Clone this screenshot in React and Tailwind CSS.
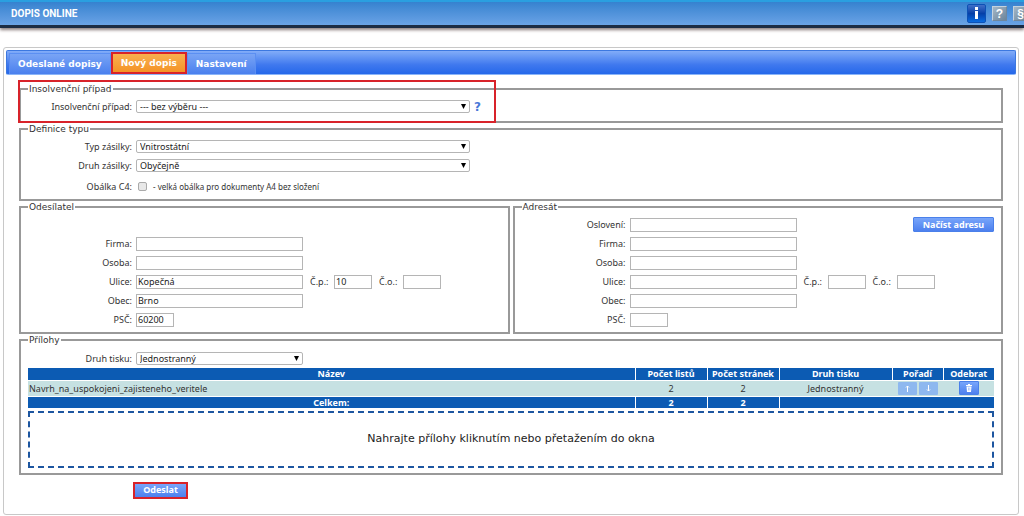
import React, { useState } from 'react';

const Fieldset = ({ legend, className = '', children }) => (
    <fieldset className={`min-w-0 border-2 border-[#999] px-[7px] ${className}`}>
        <legend className="px-px font-['DejaVu_Sans',sans-serif] text-[9px] leading-[12px] text-[#333]">{legend}</legend>
        {children}
    </fieldset>
);

const Row = ({ id, label, children }) => (
    <div className="flex h-[19px] items-center gap-1">
        <label htmlFor={id} className="w-[104px] shrink-0 text-right">{label}</label>
        {children}
    </div>
);

const Select = ({ id, width, options }) => (
    <div className={`relative ${width}`}>
        <select id={id} className="block h-[13px] w-full appearance-none rounded-[2px] border border-[#b5b5b5] bg-white pl-[3px] leading-[11px] text-[#222]">
            {options.map((o) => <option key={o}>{o}</option>)}
        </select>
        <svg viewBox="0 0 5 5" className="pointer-events-none absolute top-1 right-1 h-[5px] w-[5px]">
            <path d="M0 0h5L2.500 5z" fill="#000" />
        </svg>
    </div>
);

const TextInput = ({ id, width = 'w-[167px]', value = '' }) => (
    <input id={id} type="text" defaultValue={value} className={`block h-[14px] border border-[#b5b5b5] bg-white px-[1px] leading-[12px] text-[#222] ${width}`} />
);

const Street = ({ prefix, street, number }) => (
    <Row id={`${prefix}-ulice`} label="Ulice:">
        <TextInput id={`${prefix}-ulice`} value={street} />
        <label htmlFor={`${prefix}-cp`} className="ml-[3px] w-[20px] whitespace-nowrap">Č.p.:</label>
        <TextInput id={`${prefix}-cp`} width="w-[38px]" value={number} />
        <label htmlFor={`${prefix}-co`} className="ml-[3px] w-[20px] whitespace-nowrap">Č.o.:</label>
        <TextInput id={`${prefix}-co`} width="w-[38px]" />
    </Row>
);

const Address = ({ prefix, street, number, city, zip }) => (
    <>
        <Row id={`${prefix}-firma`} label="Firma:"><TextInput id={`${prefix}-firma`} /></Row>
        <Row id={`${prefix}-osoba`} label="Osoba:"><TextInput id={`${prefix}-osoba`} /></Row>
        <Street prefix={prefix} street={street} number={number} />
        <Row id={`${prefix}-obec`} label="Obec:"><TextInput id={`${prefix}-obec`} value={city} /></Row>
        <Row id={`${prefix}-psc`} label="PSČ:"><TextInput id={`${prefix}-psc`} width="w-[38px]" value={zip} /></Row>
    </>
);

const tabs = ['Odeslané dopisy', 'Nový dopis', 'Nastavení'];

const App = () => {
    const [active, setActive] = useState('Nový dopis');

    return (
        <div className="bg-white font-['Noto_Sans','DejaVu_Sans',sans-serif] text-[9px] leading-[12px] text-[#333]">
            <header className="flex h-[28px] items-center justify-between overflow-hidden border-t-2 border-b-3 border-t-[#2a9fe0] border-b-[#1c2c44] bg-linear-to-b from-[#3582cf] to-[#6aa3e6] pl-[11px] shadow-[0_2px_3px_#8c7f7f]">
                <h1 className="font-['Roboto',sans-serif] text-[10px] font-bold text-white">DOPIS ONLINE</h1>
                <div className="-mr-1 flex items-center gap-[6px]">
                    <button type="button" aria-label="Informace" className="h-[19px] w-[19px] rounded-[2px] border border-[#0d51b5] bg-linear-to-b from-[#3f6fc8] via-[#0640a8] to-[#0a6be0]">
                        <svg viewBox="0 0 17 17" className="block h-full w-full">
                            <path d="M7 2h3v3H7zM7 6h3v8H7z" fill="#fff" />
                        </svg>
                    </button>
                    <button type="button" className="h-[15px] w-[15px] border border-[#6f879e] border-t-[#c5d2de] border-l-[#c5d2de] bg-linear-to-br from-[#a5b8c8] to-[#6c8499] font-['Liberation_Sans',sans-serif] text-[12px] leading-[12px] font-bold text-white">?</button>
                    <button type="button" className="h-[15px] w-[15px] border border-[#6f879e] border-t-[#c5d2de] border-l-[#c5d2de] bg-linear-to-br from-[#a5b8c8] to-[#6c8499] font-['Liberation_Sans',sans-serif] text-[12px] leading-[12px] font-bold text-white">§</button>
                </div>
            </header>

            <main className="mt-[19px] mr-[5px] mb-[2px] ml-[3px] rounded-[3px] border border-[#c8c8c8] p-[2px] pb-[15px]">
                <nav className="flex h-[25px] items-end rounded-[2px] border border-[#3c78e0] border-b-[#8ab4f8] bg-linear-to-b from-[#82acf8] via-[#3f78ee] via-60% to-[#2468ea] pl-[2px] font-['DejaVu_Sans',sans-serif] text-[9px] font-bold text-white">
                    {tabs.map((tab) => (
                        <button
                            key={tab}
                            type="button"
                            onClick={() => setActive(tab)}
                            className={tab === active
                                ? 'h-[22px] border-2 border-[#d8232a] bg-linear-to-b from-[#f9b04e] to-[#f49325] px-[8px]'
                                : 'h-[21px] border border-b-0 border-[#5b8ff2] bg-linear-to-b from-[#79a4f5] to-[#4a80ee] px-[8px]'}
                        >
                            {tab}
                        </button>
                    ))}
                </nav>

                <form className="px-[13px] pt-[8px]" onSubmit={(e) => e.preventDefault()}>
                    <div className="relative">
                        <Fieldset legend="Insolvenční případ" className="h-[40px] pt-[2px]">
                            <Row id="pripad" label="Insolvenční případ:">
                                <Select id="pripad" width="w-[334px]" options={['--- bez výběru ---']} />
                                <a href="#napoveda" className="font-['DejaVu_Sans',sans-serif] text-[12px] font-bold text-[#4a78d8]">?</a>
                            </Row>
                        </Fieldset>
                        <div className="pointer-events-none absolute -top-[3px] -left-px h-[43px] w-[478px] border-2 border-[#d8232a]" />
                    </div>

                    <Fieldset legend="Definice typu" className="h-[78px] pt-[2px]">
                        <Row id="typ" label="Typ zásilky:">
                            <Select id="typ" width="w-[334px]" options={['Vnitrostátní']} />
                        </Row>
                        <Row id="druh" label="Druh zásilky:">
                            <Select id="druh" width="w-[334px]" options={['Obyčejně']} />
                        </Row>
                        <div className="pt-[2px]">
                            <Row id="obalka" label="Obálka C4:">
                                <input id="obalka" type="checkbox" className="ml-[2px] h-[9px] w-[9px] appearance-none rounded-[2px] border border-[#aaa] bg-[#e8e8e8]" />
                                <span className="ml-[2px] text-[8px]">- velká obálka pro dokumenty A4 bez složení</span>
                            </Row>
                        </div>
                    </Fieldset>

                    <div className="flex gap-[3px]">
                        <Fieldset legend="Odesílatel" className="h-[133px] flex-1 pt-[21px]">
                            <Address prefix="odesilatel" street="Kopečná" number="10" city="Brno" zip="60200" />
                        </Fieldset>
                        <Fieldset legend="Adresát" className="h-[133px] flex-1 pt-[2px]">
                            <div className="flex items-center justify-between">
                                <Row id="osloveni" label="Oslovení:"><TextInput id="osloveni" /></Row>
                                <button type="button" className="h-[15px] w-[81px] rounded-[1px] border border-[#4a80ea] bg-linear-to-b from-[#78a5fa] to-[#4d80ee] text-[9px] leading-[12px] font-bold whitespace-nowrap text-white">Načíst adresu</button>
                            </div>
                            <Address prefix="adresat" />
                        </Fieldset>
                    </div>

                    <Fieldset legend="Přílohy" className="pt-[3px] pb-[5px]">
                        <Row id="tisk" label="Druh tisku:">
                            <Select id="tisk" width="w-[167px]" options={['Jednostranný']} />
                        </Row>
                        <table className="w-full table-fixed border-collapse text-center leading-[11px]">
                            <colgroup>
                                <col />
                                <col className="w-[72px]" />
                                <col className="w-[72px]" />
                                <col className="w-[113px]" />
                                <col className="w-[51px]" />
                                <col className="w-[51px]" />
                            </colgroup>
                            <thead className="bg-[#0c5bb3] text-[9px] whitespace-nowrap text-white">
                                <tr className="h-[12px]">
                                    <th className="p-0">Název</th>
                                    <th className="border-l border-white p-0">Počet listů</th>
                                    <th className="border-l border-white p-0">Počet stránek</th>
                                    <th className="border-l border-white p-0">Druh tisku</th>
                                    <th className="border-l border-white p-0">Pořadí</th>
                                    <th className="border-l border-white p-0">Odebrat</th>
                                </tr>
                            </thead>
                            <tbody className="border-y border-white bg-[#c6e1e2]">
                                <tr className="h-[16px]">
                                    <td className="p-0 pl-px text-left">Navrh_na_uspokojeni_zajisteneho_veritele</td>
                                    <td className="p-0">2</td>
                                    <td className="p-0">2</td>
                                    <td className="p-0">Jednostranný</td>
                                    <td className="p-0">
                                        <div className="flex justify-center gap-[2px]">
                                            <button type="button" aria-label="Nahoru" className="flex h-[13px] w-[19px] items-center justify-center rounded-[1px] bg-[#8eb8ef]">
                                                <svg viewBox="0 0 7 7" className="h-[7px] w-[7px]"><path d="M3.5 7V1M2 2.500l1.500-1.500 1.500 1.500" stroke="#fff" fill="none" /></svg>
                                            </button>
                                            <button type="button" aria-label="Dolů" className="flex h-[13px] w-[19px] items-center justify-center rounded-[1px] bg-[#8eb8ef]">
                                                <svg viewBox="0 0 7 7" className="h-[7px] w-[7px]"><path d="M3.5 0v6M2 4.500l1.500 1.500 1.500-1.500" stroke="#fff" fill="none" /></svg>
                                            </button>
                                        </div>
                                    </td>
                                    <td className="p-0">
                                        <button type="button" aria-label="Odebrat přílohu" className="mx-auto flex h-[14px] w-[20px] items-center justify-center rounded-[1px] border border-[#4a80ea] bg-linear-to-b from-[#78a5fa] to-[#4d80ee]">
                                            <svg viewBox="0 0 8 8" className="h-[8px] w-[8px]"><path d="M1 1h2V0h2v1h2v1H1zM1.500 2.500h5L6 8H2z" fill="#fff" /><path d="M3.500 3.500v3M4.800 3.500v3" stroke="#6a96f4" strokeWidth=".5" /></svg>
                                        </button>
                                    </td>
                                </tr>
                            </tbody>
                            <tfoot className="bg-[#0c5bb3] text-[9px] text-white">
                                <tr className="h-[11px]">
                                    <th className="p-0">Celkem:</th>
                                    <th className="border-l border-white p-0">2</th>
                                    <th className="border-l border-white p-0">2</th>
                                    <th colSpan={3} className="border-l border-white p-0" />
                                </tr>
                            </tfoot>
                        </table>
                        <button type="button" className="mt-[3px] block h-[57px] w-full border-2 border-dashed border-[#1d56a0] font-['DejaVu_Sans',sans-serif] text-[11px] text-[#222]">
                            Nahrajte přílohy kliknutím nebo přetažením do okna
                        </button>
                    </Fieldset>

                    <button type="submit" className="mt-[7px] ml-[114px] block h-[17px] w-[55px] border-2 border-[#d8232a] bg-linear-to-b from-[#78a5fa] to-[#4d80ee] text-[9px] leading-[12px] font-bold text-white">Odeslat</button>
                </form>
            </main>
        </div>
    );
};

export default App;
